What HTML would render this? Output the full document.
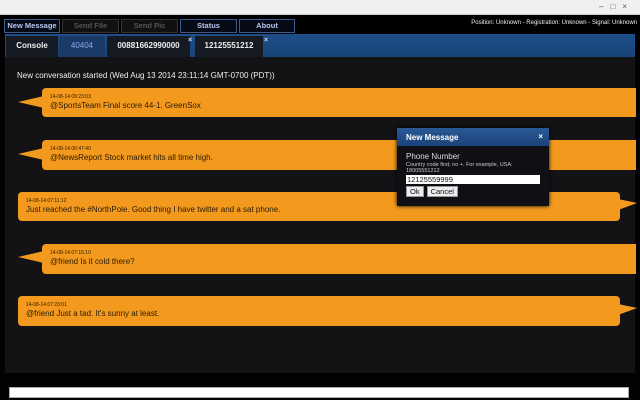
<!DOCTYPE html>
<html><head><style>
*{margin:0;padding:0;box-sizing:border-box}
body{width:640px;height:400px;background:#020204;font-family:"Liberation Sans",sans-serif;position:relative;overflow:hidden}
.a{position:absolute}
.tb{left:0;top:0;width:640px;height:15px;background:#f0f0f0;border-bottom:1px solid #ccc}
.nav{left:0;top:15px;width:640px;height:19px;background:#000}
.btn{top:19px;height:14px;border:1px solid #3a5a90;font-size:7.5px;font-weight:bold;text-align:center;line-height:12px;color:#b8c8f0;background:#060a14}
.btn.d{color:#555;border-color:#333;background:#111}
.tabs{left:5px;top:34px;width:630px;height:23px;background:linear-gradient(#1f4f88,#184478)}
.tab{top:36px;height:21px;font-size:8px;font-weight:bold;color:#eee;line-height:20px;text-align:center;background:#161a22}
.x{font-size:7px;color:#ddd;font-weight:bold}
.panel{left:5px;top:57px;width:630px;height:316px;background:#131316}
.b{background:#f39a1e;border-radius:4px;color:#2a1a00}
.b .t{font-size:5px;padding:7px 0 0 8px;line-height:5px}
.b .m{font-size:8px;padding:1px 0 0 8px}
.dlg{left:397px;top:128px;width:152px;height:78px;background:#101014;box-shadow:0 0 4px #000}
</style></head><body>
<div class="a tb"></div>
<div class="a" style="right:6px;top:2px;font-size:8px;color:#555;letter-spacing:7px">–□×</div>
<div class="a nav"></div>
<div class="a btn" style="left:4px;width:56px">New Message</div>
<div class="a btn d" style="left:62px;width:57px">Send File</div>
<div class="a btn d" style="left:121px;width:57px">Send Pic</div>
<div class="a btn" style="left:180px;width:57px">Status</div>
<div class="a btn" style="left:239px;width:56px">About</div>
<div class="a" style="right:3px;top:20px;font-size:6px;color:#eee">Position: Unknown - Registration: Unknown - Signal: Unknown</div>
<div class="a tabs"></div>
<div class="a tab" style="left:6px;width:52px">Console</div>
<div class="a tab" style="left:59px;width:46px;color:#8aa8e8;background:#1c3a66;font-weight:normal">40404</div>
<div class="a tab" style="left:107px;width:83px">00881662990000</div>
<div class="a x" style="left:188px;top:37px">×</div>
<div class="a tab" style="left:195px;width:68px">12125551212</div>
<div class="a x" style="left:264px;top:37px">×</div>
<div class="a panel"></div>
<div class="a" style="left:17px;top:71px;font-size:8px;color:#eee">New conversation started (Wed Aug 13 2014 23:11:14 GMT-0700 (PDT))</div>

<svg class="a" style="left:0;top:0" width="640" height="400">
<g fill="#f39a1e">
<polygon points="18,102 44,96 44,108"/>
<polygon points="18,154 44,148 44,160"/>
<polygon points="637,203 618,199 618,210"/>
<polygon points="18,257 44,251 44,263"/>
<polygon points="637,308 618,304 618,315"/>
</g></svg>
<div class="a b" style="left:42px;top:88px;width:594px;height:29px;border-radius:4px 0 0 4px"><div class="t">14-08-14 09:23:03</div><div class="m">@SportsTeam Final score 44-1. GreenSox</div></div>
<div class="a b" style="left:42px;top:140px;width:594px;height:30px;border-radius:4px 0 0 4px"><div class="t">14-08-14 06:47:40</div><div class="m">@NewsReport Stock market hits all time high.</div></div>
<div class="a b" style="left:18px;top:192px;width:602px;height:29px"><div class="t">14-08-14 07:11:12</div><div class="m">Just reached the #NorthPole. Good thing I have twitter and a sat phone.</div></div>
<div class="a b" style="left:42px;top:244px;width:594px;height:30px;border-radius:4px 0 0 4px"><div class="t">14-08-14 07:15:10</div><div class="m">@friend Is it cold there?</div></div>
<div class="a b" style="left:18px;top:296px;width:602px;height:30px"><div class="t">14-08-14 07:23:01</div><div class="m">@friend Just a tad. It's sunny at least.</div></div>

<div class="a dlg">
<div style="height:18px;background:linear-gradient(#2a5a96,#1a4278);color:#fff;font-size:8px;font-weight:bold;padding:5px 0 0 9px;position:relative">New Message<span style="position:absolute;right:6px;top:4px">×</span></div>
<div style="color:#ddd;font-size:8px;padding:6px 0 0 9px">Phone Number</div>
<div style="color:#ccc;font-size:5.5px;padding:1px 0 0 9px;line-height:6px">Country code first, no +. For example, USA:<br>18005551212</div>
<div style="margin:1px 0 0 9px;width:134px;height:9px;background:#fff;color:#111;font-size:7.5px;line-height:9px;padding-left:1px">12125559999</div>
<div style="margin:2px 0 0 9px;display:flex;gap:3px"><span style="background:#eee;border:1px solid #999;font-size:7.5px;padding:0 3px;color:#111">Ok</span><span style="background:#eee;border:1px solid #999;font-size:7.5px;padding:0 3px;color:#111">Cancel</span></div>
</div>

<div class="a" style="left:9px;top:387px;width:620px;height:11px;background:#fff;border:1px solid #aaa"></div>
</body></html>
